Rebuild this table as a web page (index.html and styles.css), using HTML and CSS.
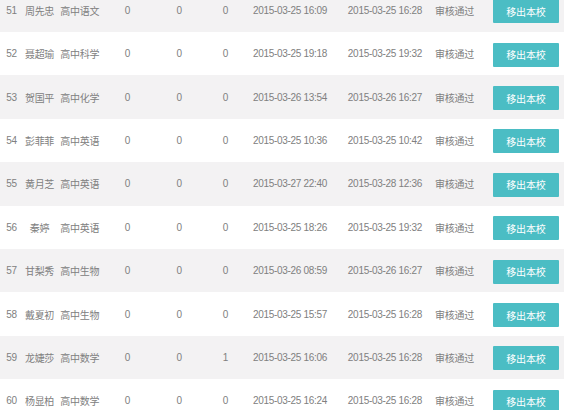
FILE: index.html
```html
<!DOCTYPE html>
<html lang="zh-CN">
<head>
<meta charset="utf-8">
<title>教师列表</title>
<link rel="stylesheet" href="styles.css">
</head>
<body>
<div class="list">
  <div class="row odd"><span>51</span><span>周先忠</span><span>高中语文</span><span>0</span><span>0</span><span>0</span><span>2015-03-25 16:09</span><span>2015-03-25 16:28</span><span>审核通过</span><span class="op"><button class="btn">移出本校</button></span></div>
  <div class="row"><span>52</span><span>聂超瑜</span><span>高中科学</span><span>0</span><span>0</span><span>0</span><span>2015-03-25 19:18</span><span>2015-03-25 19:32</span><span>审核通过</span><span class="op"><button class="btn">移出本校</button></span></div>
  <div class="row odd"><span>53</span><span>贺国平</span><span>高中化学</span><span>0</span><span>0</span><span>0</span><span>2015-03-26 13:54</span><span>2015-03-26 16:27</span><span>审核通过</span><span class="op"><button class="btn">移出本校</button></span></div>
  <div class="row"><span>54</span><span>彭菲菲</span><span>高中英语</span><span>0</span><span>0</span><span>0</span><span>2015-03-25 10:36</span><span>2015-03-25 10:42</span><span>审核通过</span><span class="op"><button class="btn">移出本校</button></span></div>
  <div class="row odd"><span>55</span><span>黄月芝</span><span>高中英语</span><span>0</span><span>0</span><span>0</span><span>2015-03-27 22:40</span><span>2015-03-28 12:36</span><span>审核通过</span><span class="op"><button class="btn">移出本校</button></span></div>
  <div class="row"><span>56</span><span>秦婷</span><span>高中英语</span><span>0</span><span>0</span><span>0</span><span>2015-03-25 18:26</span><span>2015-03-25 19:32</span><span>审核通过</span><span class="op"><button class="btn">移出本校</button></span></div>
  <div class="row odd"><span>57</span><span>甘梨秀</span><span>高中生物</span><span>0</span><span>0</span><span>0</span><span>2015-03-26 08:59</span><span>2015-03-26 16:27</span><span>审核通过</span><span class="op"><button class="btn">移出本校</button></span></div>
  <div class="row"><span>58</span><span>戴夏初</span><span>高中生物</span><span>0</span><span>0</span><span>0</span><span>2015-03-25 15:57</span><span>2015-03-25 16:28</span><span>审核通过</span><span class="op"><button class="btn">移出本校</button></span></div>
  <div class="row odd"><span>59</span><span>龙婕莎</span><span>高中数学</span><span>0</span><span>0</span><span>1</span><span>2015-03-25 16:06</span><span>2015-03-25 16:28</span><span>审核通过</span><span class="op"><button class="btn">移出本校</button></span></div>
  <div class="row"><span>60</span><span>杨显柏</span><span>高中数学</span><span>0</span><span>0</span><span>0</span><span>2015-03-25 16:24</span><span>2015-03-25 16:28</span><span>审核通过</span><span class="op"><button class="btn">移出本校</button></span></div>
</div>
</body>
</html>
```
FILE: styles.css
```css
html, body {
  margin: 0;
  padding: 0;
  background: #fff;
  overflow: hidden;
}
body {
  width: 564px;
  height: 410px;
  font-family: "Liberation Sans", "Noto Sans CJK SC", sans-serif;
  font-size: 10px;
  color: #808080;
}
.list {
  margin-top: -11.4px;
}
.row {
  display: grid;
  grid-template-columns: 23px 33px 47.4px 48.2px 55.2px 37.4px 91.6px 98.4px 40.6px 1fr;
  height: 43.4px;
  align-items: center;
  justify-items: center;
  background: #fff;
  letter-spacing: -0.3px;
}
.row span {
  white-space: nowrap;
}
.row.odd {
  background: #f3f2f3;
}
.row .op {
  justify-self: start;
  padding-left: 18.2px;
  display: flex;
  align-items: center;
}
.btn {
  width: 66px;
  height: 24px;
  margin-top: 2px;
  border: none;
  border-radius: 1px;
  background: #4bbdc4;
  color: #fff;
  font-family: "Noto Sans CJK SC", sans-serif;
  font-size: 10px;
  letter-spacing: -0.2px;
  padding: 0;
}
```
